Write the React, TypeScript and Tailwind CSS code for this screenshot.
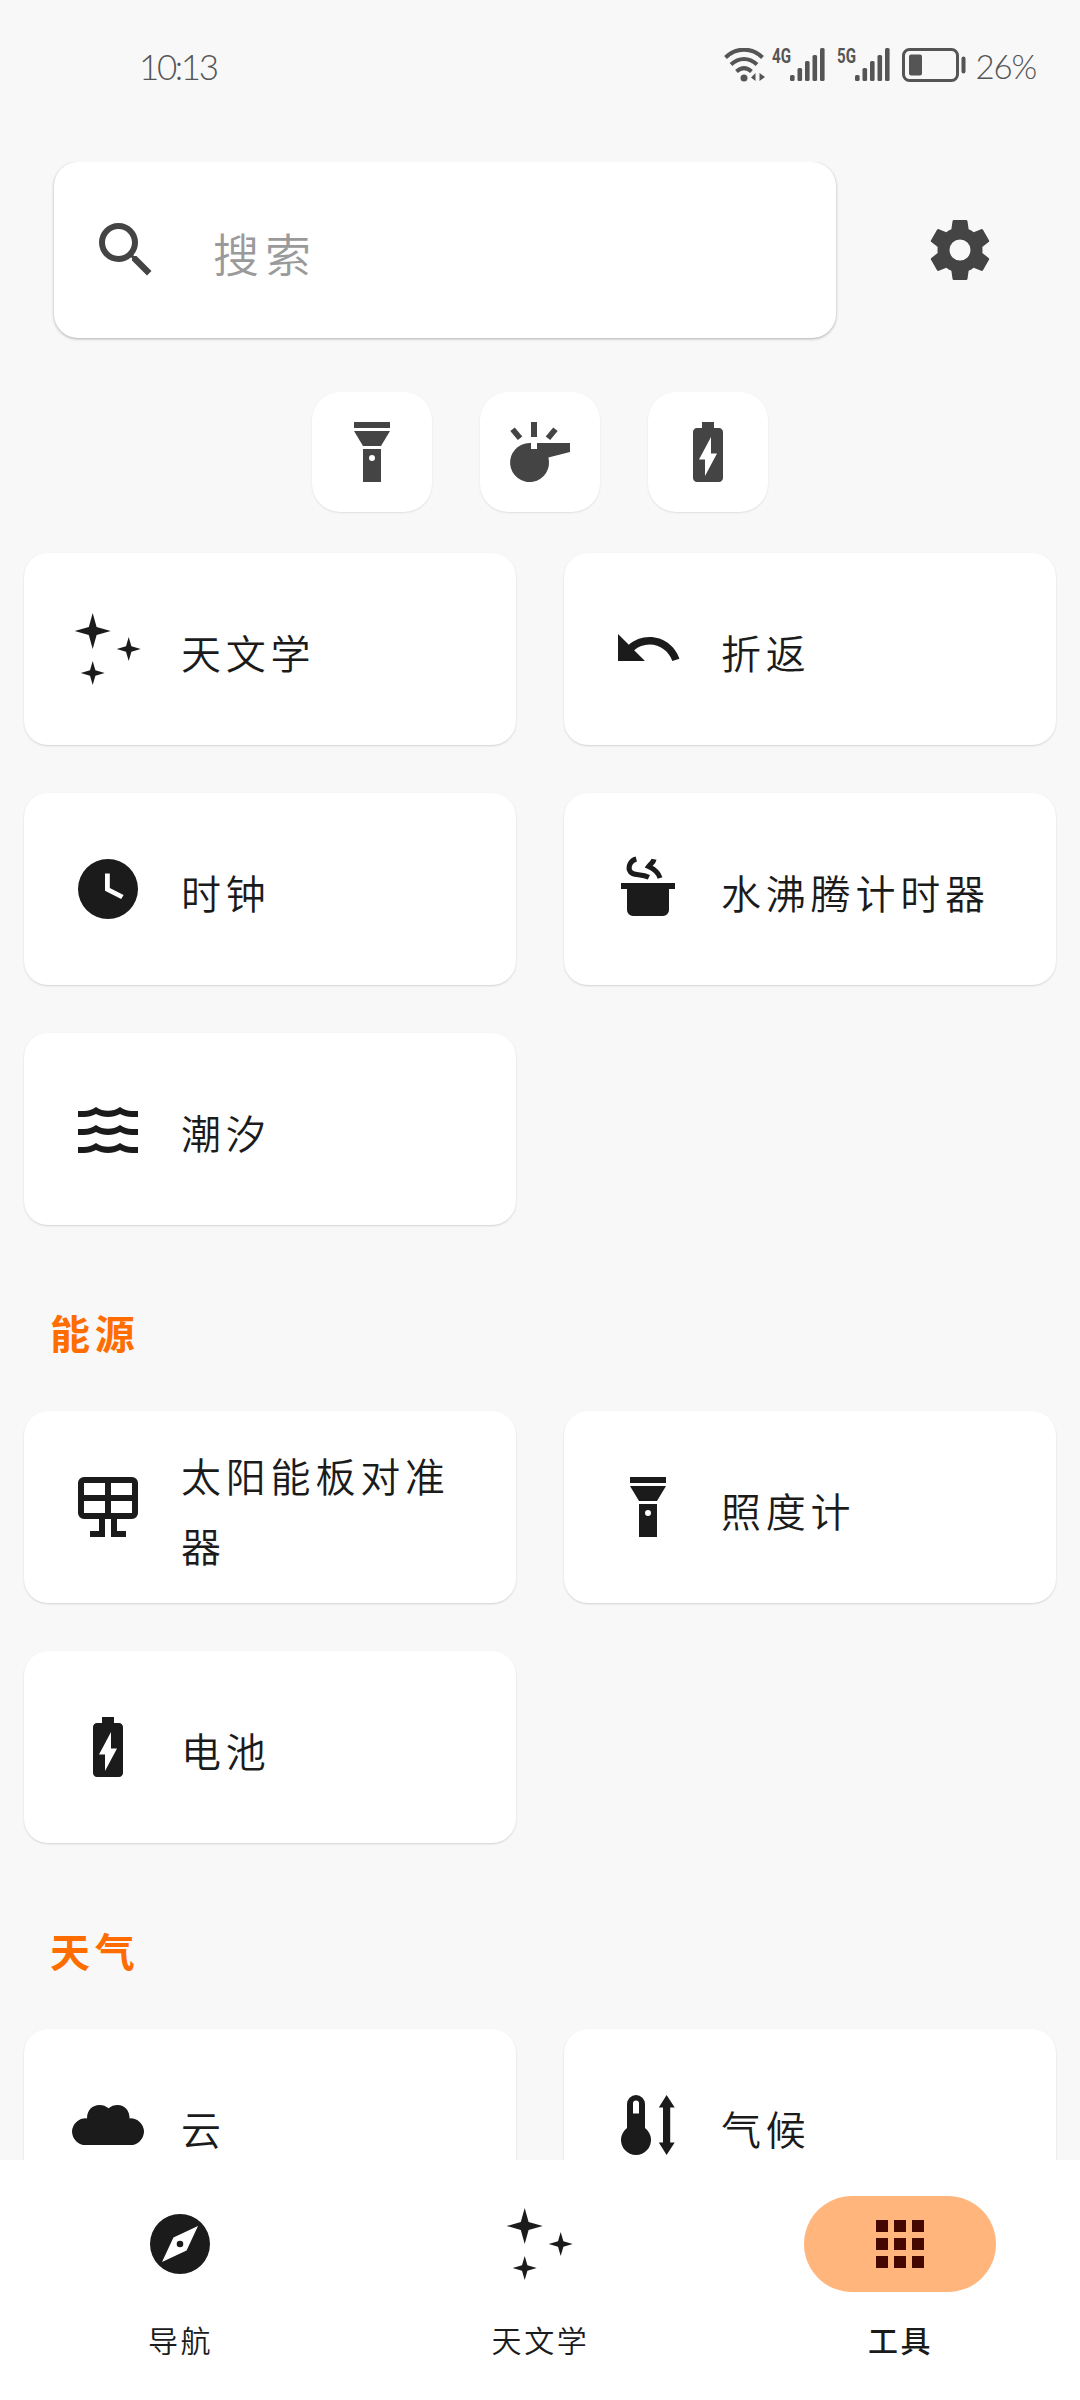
import React from 'react';
import { MdApps, MdBatteryChargingFull, MdSearch, MdUndo } from 'react-icons/md';

type IconProps = { className?: string };

interface Tool {
  name: string;
  icon: React.ComponentType<IconProps>;
}

interface ToolGroup {
  title?: string;
  tools: Tool[];
}

function Svg({ className, children }: IconProps & { children: React.ReactNode }) {
  return (
    <svg viewBox="0 0 24 24" fill="currentColor" className={className}>
      {children}
    </svg>
  );
}

const StarsIcon = ({ className }: IconProps) => (
  <Svg className={className}>
    <path d="M6.9 0L8.2 4.7L12.9 6L8.2 7.3L6.9 12L5.6 7.3L.9 6L5.6 4.7Z" />
    <path d="M18.9 8L19.8 11.1L22.9 12L19.8 12.9L18.9 16L18 12.9L14.9 12L18 11.1Z" />
    <path d="M6.9 16L7.8 19.1L10.9 20L7.8 20.9L6.9 24L6 20.9L2.9 20L6 19.1Z" />
  </Svg>
);

const ClockIcon = ({ className }: IconProps) => (
  <Svg className={className}>
    <path d="M12 2A10 10 0 0 0 2 12A10 10 0 0 0 12 22A10 10 0 0 0 22 12A10 10 0 0 0 12 2M16.4 15.3L11 12.6V6.8H12.6V11.7L17.2 14L16.4 15.3Z" />
  </Svg>
);

const PotIcon = ({ className }: IconProps) => (
  <Svg className={className}>
    <path d="M3 10H21V12H19V19A2 2 0 0 1 17 21H7A2 2 0 0 1 5 19V12H3Z" />
    <path
      d="M8.1 2C6.2 2.5 5.4 4.2 5.8 5.7C6.5 7.9 9.3 6.7 12.3 8.1M14 2.1C13.8 3.2 13 3.4 12.2 4.5C14 5.3 15.4 6.4 16 8.3"
      fill="none"
      stroke="currentColor"
      strokeWidth="1.7"
    />
  </Svg>
);

const WavesIcon = ({ className }: IconProps) => (
  <Svg className={className}>
    <path d="M20,12H22V14H20C18.62,14 17.26,13.65 16,13C13.5,14.3 10.5,14.3 8,13C6.74,13.65 5.37,14 4,14H2V12H4C5.39,12 6.78,11.53 8,10.67C10.44,12.38 13.56,12.38 16,10.67C17.22,11.53 18.61,12 20,12M20,6H22V8H20C18.62,8 17.26,7.65 16,7C13.5,8.3 10.5,8.3 8,7C6.74,7.65 5.37,8 4,8H2V6H4C5.39,6 6.78,5.53 8,4.67C10.44,6.38 13.56,6.38 16,4.67C17.22,5.53 18.61,6 20,6M20,18H22V20H20C18.62,20 17.26,19.65 16,19C13.5,20.3 10.5,20.3 8,19C6.74,19.65 5.37,20 4,20H2V18H4C5.39,18 6.78,17.53 8,16.67C10.44,18.38 13.56,18.38 16,16.67C17.22,17.53 18.61,18 20,18Z" />
  </Svg>
);

const SolarPanelIcon = ({ className }: IconProps) => (
  <Svg className={className}>
    <path
      fillRule="evenodd"
      d="M4 2H20A2 2 0 0 1 22 4V14A2 2 0 0 1 20 16H15V20H18V22H13V16H11V22H6V20H9V16H4A2 2 0 0 1 2 14V4A2 2 0 0 1 4 2M4 4V8H11V4H4M13 4V8H20V4H13M4 10V14H11V10H4M13 10V14H20V10H13Z"
    />
  </Svg>
);

const FlashlightIcon = ({ className }: IconProps) => (
  <Svg className={className}>
    <path d="M9 10L6 5H18L15 10H9M18 4H6V2H18V4M9 22V11H15V22H9M12 13A1 1 0 0 0 11 14A1 1 0 0 0 12 15A1 1 0 0 0 13 14A1 1 0 0 0 12 13Z" />
  </Svg>
);

const WhistleIcon = ({ className }: IconProps) => (
  <Svg className={className}>
    <path d="M9 2H11V7H9Z" />
    <path d="M2.1 5L3.6 3.8L6.1 6.8L4.6 8Z" />
    <path d="M17.9 5L16.4 3.8L13.9 6.8L15.4 8Z" />
    <path d="M9 9V11H11V9H22V12L14.8 13.8A6.5 6.5 0 1 1 8.5 9Z" />
  </Svg>
);

const CloudIcon = ({ className }: IconProps) => (
  <Svg className={className}>
    <path d="M4.6 18.7A4.6 4.6 0 0 1 0 14.2A4.6 4.6 0 0 1 5 9.8C5 7 6.8 5.3 9.2 5.3C10.4 5.3 11.3 5.7 12.2 6.4C13 5.7 14 5.3 15.2 5.3C17.6 5.3 19.2 7.2 19.2 9.8A4.5 4.5 0 0 1 24 14.2A4.6 4.6 0 0 1 19.4 18.7Z" />
  </Svg>
);

const ClimateIcon = ({ className }: IconProps) => (
  <Svg className={className}>
    <path
      fillRule="evenodd"
      d="M5 13V5A3 3 0 0 1 11 5V13A5 5 0 1 1 5 13M8 3.8A1 1 0 0 0 7 4.8V8.2H9V4.8A1 1 0 0 0 8 3.8Z"
    />
    <path d="M18.2 2L20.9 6.2H19.4V17.8H20.9L18.2 22L15.6 17.8H17V6.2H15.6Z" />
  </Svg>
);

const CompassIcon = ({ className }: IconProps) => (
  <Svg className={className}>
    <path d="M14.19,14.19L6,18L9.81,9.81L18,6M12,2A10,10 0 0,0 2,12A10,10 0 0,0 12,22A10,10 0 0,0 22,12A10,10 0 0,0 12,2M12,10.9A1.1,1.1 0 0,0 10.9,12A1.1,1.1 0 0,0 12,13.1A1.1,1.1 0 0,0 13.1,12A1.1,1.1 0 0,0 12,10.9Z" />
  </Svg>
);

const CogIcon = ({ className }: IconProps) => (
  <Svg className={className}>
    <path d="M12 15.5A3.5 3.5 0 0 1 8.5 12A3.5 3.5 0 0 1 12 8.5a3.5 3.5 0 0 1 3.5 3.5a3.5 3.5 0 0 1-3.5 3.5m7.43-2.53c.04-.32.07-.64.07-.97c0-.33-.03-.66-.07-1l2.11-1.63c.19-.15.24-.42.12-.64l-2-3.46c-.12-.22-.39-.31-.61-.22l-2.49 1c-.52-.39-1.06-.73-1.69-.98l-.37-2.65A.506.506 0 0 0 14 2h-4c-.25 0-.46.18-.5.42l-.37 2.65c-.63.25-1.17.59-1.69.98l-2.49-1c-.22-.09-.49 0-.61.22l-2 3.46c-.13.22-.07.49.12.64L4.57 11c-.04.34-.07.67-.07 1c0 .33.03.65.07.97l-2.11 1.66c-.19.15-.25.42-.12.64l2 3.46c.12.22.39.3.61.22l2.49-1.01c.52.4 1.06.74 1.69.99l.37 2.65c.04.24.25.42.5.42h4c.25 0 .46-.18.5-.42l.37-2.65c.63-.26 1.17-.59 1.69-.99l2.49 1.01c.22.08.49 0 .61-.22l2-3.46c.12-.22.07-.49-.12-.64l-2.11-1.66z" />
  </Svg>
);

const groups: ToolGroup[] = [
  {
    tools: [
      { name: '天文学', icon: StarsIcon },
      { name: '折返', icon: MdUndo },
      { name: '时钟', icon: ClockIcon },
      { name: '水沸腾计时器', icon: PotIcon },
      { name: '潮汐', icon: WavesIcon },
    ],
  },
  {
    title: '能源',
    tools: [
      { name: '太阳能板对准器', icon: SolarPanelIcon },
      { name: '照度计', icon: FlashlightIcon },
      { name: '电池', icon: MdBatteryChargingFull },
    ],
  },
  {
    title: '天气',
    tools: [
      { name: '云', icon: CloudIcon },
      { name: '气候', icon: ClimateIcon },
    ],
  },
];

const quickActions = [FlashlightIcon, WhistleIcon, MdBatteryChargingFull];

const tabs = [
  { name: '导航', icon: CompassIcon, active: false },
  { name: '天文学', icon: StarsIcon, active: false },
  { name: '工具', icon: MdApps, active: true },
];

function Signal({ label }: { label: string }) {
  return (
    <div className="flex h-[33px] items-start">
      <span className="w-[18px] origin-left scale-x-[0.72] font-['Roboto',sans-serif] text-[21px] leading-[16px] font-bold">
        {label}
      </span>
      <svg viewBox="0 0 35 33" fill="currentColor" className="h-[33px] w-[35px]">
        <rect x="0" y="27" width="4.6" height="6" rx="1.5" />
        <rect x="7.5" y="20" width="4.6" height="13" rx="1.5" />
        <rect x="15" y="13" width="4.6" height="20" rx="1.5" />
        <rect x="22.5" y="7" width="4.6" height="26" rx="1.5" />
        <rect x="30" y="0" width="4.6" height="33" rx="1.5" />
      </svg>
    </div>
  );
}

function StatusBar() {
  return (
    <div className="flex h-[162px] items-start justify-between pt-12 pr-[44px] pl-[139px] font-['Lato',sans-serif] font-light text-[#555555]">
      <span className="text-[35px] leading-[36px] tracking-[-2.4px]">10:13</span>
      <div className="flex items-start">
        <svg viewBox="0 0 42 34" className="mr-[6px] h-[34px] w-[42px]">
          <g fill="none" stroke="currentColor" strokeWidth="4">
            <path d="M1.5 9.5C12 -1 28 -1 38.5 9.5" />
            <path d="M7 16.5C15 9 25 9 33 16.5" />
            <path d="M12.5 23.5C17.5 19 22.5 19 27.5 23.5" />
          </g>
          <circle cx="20" cy="30" r="3.5" fill="currentColor" />
          <path d="M31.5 25V33L27 29.5ZM35.5 25V33L41 29Z" fill="currentColor" />
        </svg>
        <Signal label="4G" />
        <div className="w-[12px]" />
        <Signal label="5G" />
        <svg viewBox="0 0 64 34" className="ml-[12px] h-[34px] w-[64px]">
          <rect x="1.5" y="1.5" width="54" height="31" rx="6" fill="none" stroke="currentColor" strokeWidth="3" />
          <rect x="7" y="6.5" width="13" height="21" rx="2" fill="currentColor" />
          <rect x="59.5" y="8.5" width="4" height="17" rx="2" fill="currentColor" />
        </svg>
        <span className="ml-[10px] text-[33px] leading-[36px] tracking-[-1.2px]">26%</span>
      </div>
    </div>
  );
}

function ToolCard({ name, icon: Icon }: Tool) {
  return (
    <div className="flex h-[192px] items-center rounded-[24px] bg-white px-12 shadow-[0_1px_2px_rgba(0,0,0,0.15)]">
      <Icon className="size-[72px] shrink-0" />
      <span className="ml-[37px] pt-[5px] text-[40px] leading-[70px] tracking-[4.8px]">{name}</span>
    </div>
  );
}

export default function App() {
  return (
    <div className="flex h-[2400px] w-[1080px] flex-col overflow-hidden bg-[#f8f8f8] font-['Noto_Sans_CJK_SC',sans-serif] font-[350] text-[#1b1b1b]">
      <StatusBar />

      <main className="min-h-0 flex-1 overflow-hidden">
        <div className="flex items-center pl-[54px] text-[#444444]">
          <div className="flex h-[176px] w-[782px] items-center rounded-[24px] bg-white pl-9 shadow-[0_1px_3px_rgba(0,0,0,0.3)]">
            <MdSearch className="size-[72px]" />
            <span className="ml-[51px] pt-1 text-[46px] leading-[70px] tracking-[6px] text-[#9a9a9a]">搜索</span>
          </div>
          <CogIcon className="ml-[88px] size-[72px]" />
        </div>

        <div className="mt-[54px] flex justify-center gap-12 text-[#444444]">
          {quickActions.map((Icon, i) => (
            <div
              key={i}
              className="flex size-[120px] items-center justify-center rounded-[28px] bg-white shadow-[0_1px_2px_rgba(0,0,0,0.1)]"
            >
              <Icon className="size-[72px]" />
            </div>
          ))}
        </div>

        <div className="pt-[41px]">
          {groups.map((group, i) => (
            <section key={i}>
              {group.title && (
                <h2 className="flex h-[186px] items-center pt-[27px] pl-[50px] text-[40px] leading-[70px] font-bold tracking-[4.8px] text-[#ff6d00]">
                  {group.title}
                </h2>
              )}
              <div className="grid grid-cols-2 gap-12 px-6">
                {group.tools.map(tool => (
                  <ToolCard key={tool.name} {...tool} />
                ))}
              </div>
            </section>
          ))}
        </div>
      </main>

      <nav className="grid h-[240px] shrink-0 grid-cols-3 bg-white pt-9">
        {tabs.map(({ name, icon: Icon, active }) => (
          <div key={name} className="flex flex-col items-center">
            <div
              className={`flex h-24 w-48 items-center justify-center rounded-full ${
                active ? 'bg-[#ffb57c] text-[#440800]' : ''
              }`}
            >
              <Icon className="size-[72px]" />
            </div>
            <span
              className={`mt-[27px] pl-px text-[30px] leading-[40px] tracking-[2.6px] ${
                active ? 'font-medium' : ''
              }`}
            >
              {name}
            </span>
          </div>
        ))}
      </nav>
    </div>
  );
}
